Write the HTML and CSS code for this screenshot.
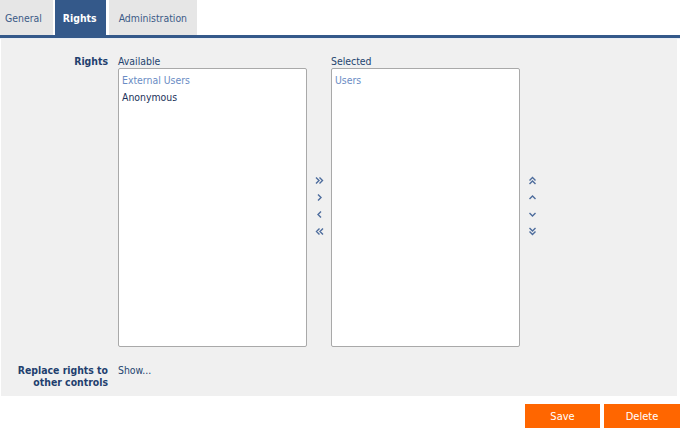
FILE: index.html
```html
<!DOCTYPE html>
<html>
<head>
<meta charset="utf-8">
<link rel="stylesheet" href="styles.css">
</head>
<body>
<div class="tabs">
  <div class="tab first">General</div>
  <div class="tab active">Rights</div>
  <div class="tab">Administration</div>
</div>
<div class="tabline"></div>
<div class="content">
  <div class="row rights-row">
    <div class="label">Rights</div>
    <div class="picker">
      <div class="col">
        <div class="caption">Available</div>
        <div class="listbox">
          <div class="item group">External Users</div>
          <div class="item">Anonymous</div>
        </div>
      </div>
      <div class="arrows">
        <svg width="9" height="9" viewBox="0 0 9 9"><path d="M1 1.5L4 4.5L1 7.5M4.5 1.5L7.5 4.5L4.5 7.5" fill="none" stroke="#4d6c9c" stroke-width="1.4"/></svg>
        <svg width="9" height="9" viewBox="0 0 9 9"><path d="M3 1.5L6 4.5L3 7.5" fill="none" stroke="#4d6c9c" stroke-width="1.4"/></svg>
        <svg width="9" height="9" viewBox="0 0 9 9"><path d="M6 1.5L3 4.5L6 7.5" fill="none" stroke="#4d6c9c" stroke-width="1.4"/></svg>
        <svg width="9" height="9" viewBox="0 0 9 9"><path d="M4.5 1.5L1.5 4.5L4.5 7.5M8 1.5L5 4.5L8 7.5" fill="none" stroke="#4d6c9c" stroke-width="1.4"/></svg>
      </div>
      <div class="col">
        <div class="caption">Selected</div>
        <div class="listbox">
          <div class="item group">Users</div>
        </div>
      </div>
      <div class="arrows">
        <svg width="9" height="9" viewBox="0 0 9 9"><path d="M1.5 4.5L4.5 1.5L7.5 4.5M1.5 8L4.5 5L7.5 8" fill="none" stroke="#4d6c9c" stroke-width="1.4"/></svg>
        <svg width="9" height="9" viewBox="0 0 9 9"><path d="M1.5 6L4.5 3L7.5 6" fill="none" stroke="#4d6c9c" stroke-width="1.4"/></svg>
        <svg width="9" height="9" viewBox="0 0 9 9"><path d="M1.5 3L4.5 6L7.5 3" fill="none" stroke="#4d6c9c" stroke-width="1.4"/></svg>
        <svg width="9" height="9" viewBox="0 0 9 9"><path d="M1.5 1L4.5 4L7.5 1M1.5 4.5L4.5 7.5L7.5 4.5" fill="none" stroke="#4d6c9c" stroke-width="1.4"/></svg>
      </div>
    </div>
  </div>
  <div class="row replace-row">
    <div class="label">Replace rights to<br>other controls</div>
    <div class="value">Show...</div>
  </div>
</div>
<div class="buttons">
  <div class="btn">Save</div>
  <div class="btn">Delete</div>
</div>
</body>
</html>
```
FILE: styles.css
```css
html, body {
  margin: 0;
  padding: 0;
  background: #ffffff;
}
body {
  font-family: "DejaVu Sans Condensed", "DejaVu Sans", sans-serif;
  font-size: 10.4px;
  color: #24446f;
}
.tabs {
  display: flex;
  gap: 2px;
  height: 35px;
  align-items: stretch;
}
.tab {
  display: flex;
  align-items: center;
  padding: 0 10px;
  background: #e6e6e6;
  color: #3b5a86;
}
.tab.first {
  padding: 0 11px 0 5px;
}
.tab.active {
  background: #34598a;
  color: #ffffff;
  font-weight: bold;
  padding: 0 9px 0 8px;
  margin-right: 1px;
}
.tabline {
  height: 3px;
  background: #34598a;
  border-bottom: 1px solid #e8edf3;
}
.content {
  background: #f0f0f0;
  margin: 0 3px 0 1px;
  padding: 16px 0 8px;
}
.row {
  display: flex;
  gap: 10px;
}
.label {
  width: 107px;
  text-align: right;
  font-weight: bold;
  color: #1f3f6e;
  line-height: 12px;
}
.picker {
  display: flex;
  align-items: stretch;
}
.col {
  display: flex;
  flex-direction: column;
}
.caption {
  line-height: 12px;
  height: 12px;
  margin-bottom: 1px;
}
.listbox {
  width: 189px;
  height: 279px;
  background: #ffffff;
  border: 1px solid #a9a9a9;
  border-radius: 2px;
  padding: 3px 3px;
  box-sizing: border-box;
}
.item {
  line-height: 17px;
  color: #1c325a;
}
.item.group {
  color: #6a8cc4;
}
.arrows {
  width: 24px;
  display: flex;
  flex-direction: column;
  align-items: center;
  justify-content: center;
  gap: 8px;
  padding-top: 9px;
}
.arrows svg {
  display: block;
}
.replace-row {
  margin-top: 17px;
}
.value {
  line-height: 12px;
}
.buttons {
  display: flex;
  justify-content: flex-end;
  gap: 4px;
  padding-top: 8px;
}
.btn {
  background: #ff6600;
  color: #ffffff;
  height: 25px;
  font-size: 11px;
  display: flex;
  align-items: center;
  justify-content: center;
  width: 75px;
}
.btn + .btn {
  width: 76px;
}
```
